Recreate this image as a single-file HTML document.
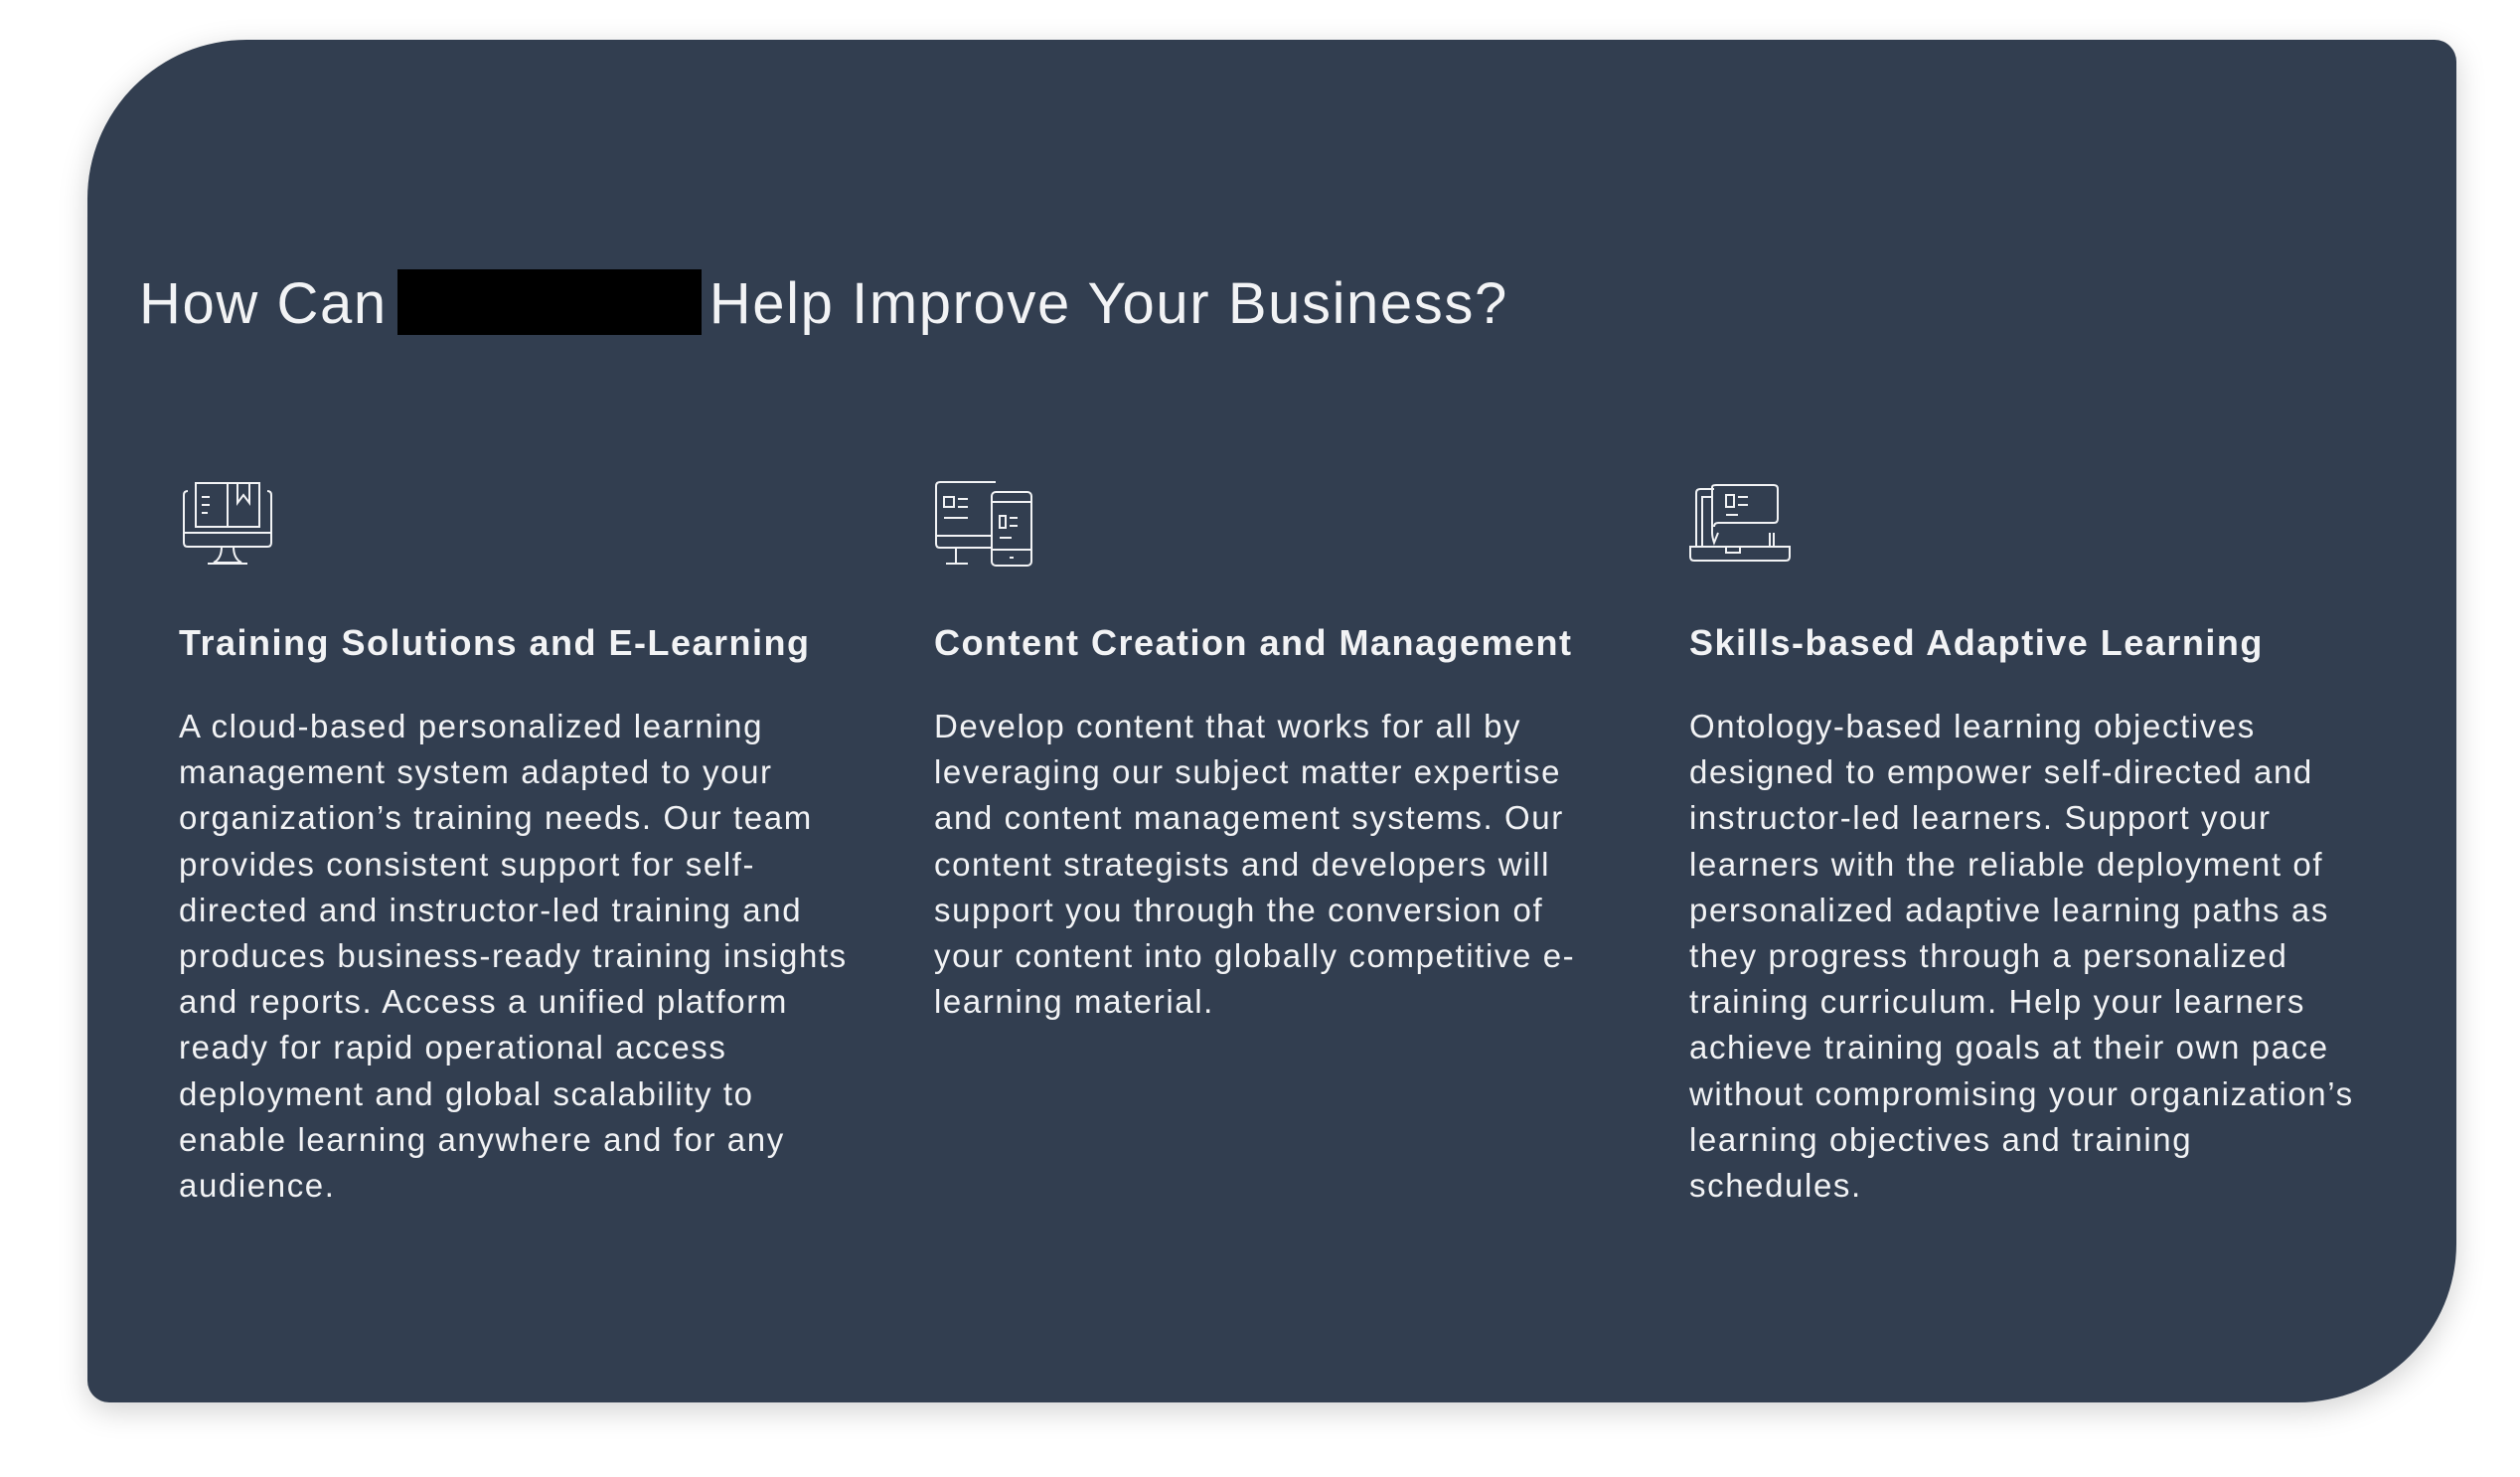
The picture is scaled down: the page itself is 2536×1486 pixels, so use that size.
<!DOCTYPE html>
<html><head><meta charset="utf-8"><style>
html,body{margin:0;padding:0;background:#fff;width:2536px;height:1486px;overflow:hidden}
body{font-family:"Liberation Sans",sans-serif;color:#f2f3f5}
.card{position:absolute;left:88px;top:40px;width:2384px;height:1371px;background:#323e50;border-radius:160px 22px 160px 22px;box-shadow:0 8px 30px rgba(0,0,0,0.18)}
h1{position:absolute;left:140px;top:266px;margin:0;font-weight:normal;font-size:58px;letter-spacing:1.6px;line-height:80px;white-space:nowrap}
.box{display:inline-block;width:306px;height:66px;background:#000;vertical-align:middle;margin:0 8px 0 10px;position:relative;top:-6px}
.col{position:absolute;top:0}
.col h2{position:absolute;left:0;top:622px;margin:0;font-size:36px;font-weight:bold;white-space:nowrap;line-height:50px;letter-spacing:1.5px}
.col p{position:absolute;left:0;top:708px;margin:0;font-size:33px;line-height:46.2px;white-space:nowrap;letter-spacing:1.6px}
svg{position:absolute;fill:none;stroke:#f2f3f5;stroke-width:2}
</style></head><body>
<div class="card"></div>
<h1>How Can<span class="box"></span>Help Improve Your Business?</h1>

<svg style="left:183px;top:484px" width="94" height="86" viewBox="0 0 94 86">
<path d="M6 10 Q2 10 2 14 V62 Q2 66 6 66 H86 Q90 66 90 62 V14 Q90 10 86 10"/>
<path d="M2 52 H90"/>
<rect x="14" y="2" width="32" height="44"/><rect x="46" y="2" width="32" height="44"/>
<path d="M56 2 V22 L62 14 L68 22 V2"/>
<path d="M20 16 H28 M20 24 H28 M20 32 H26"/>
<path d="M40 66 Q40 78 32 82 H60 Q52 78 52 66 M26 83 H66"/>
</svg>

<svg style="left:940px;top:483px" width="102" height="88" viewBox="0 0 102 88">
<path d="M62 2 H6 Q2 2 2 6 V64 Q2 68 6 68 H58"/>
<path d="M2 56 H58"/>
<rect x="10" y="17" width="10" height="10"/><path d="M24 19 H34 M24 27 H34 M10 38 H34"/>
<path d="M22 68 V84 H12 M22 84 H34"/>
<rect x="58" y="12" width="40" height="74" rx="4"/>
<path d="M58 22 H98 M58 70 H98 M76 78 H80"/>
<rect x="66" y="36" width="6" height="12"/><path d="M76 38 H84 M76 46 H84 M66 58 H78"/>
</svg>

<svg style="left:1699px;top:486px" width="104" height="82" viewBox="0 0 104 82">
<path d="M26 6 H12 Q8 6 8 10 V64"/>
<path d="M14 64 V14 H24"/>
<path d="M30 50 L26 60 Q24 54 24 50 V4 Q24 2 28 2 H86 Q90 2 90 6 V36 Q90 40 86 40 H30 Q26 40 26 44"/>
<rect x="38" y="12" width="8" height="12"/><path d="M50 14 H60 M50 22 H60 M38 32 H50"/>
<path d="M82 50 V64 M86 50 V64"/>
<path d="M2 64 H102 V74 Q102 78 98 78 H6 Q2 78 2 74 Z"/>
<path d="M38 64 V70 H52 V64"/>
</svg>

<div class="col" style="left:180px">
<h2>Training Solutions and E-Learning</h2>
<p>A cloud-based personalized learning<br>management system adapted to your<br>organization’s training needs. Our team<br>provides consistent support for self-<br>directed and instructor-led training and<br>produces business-ready training insights<br>and reports. Access a unified platform<br>ready for rapid operational access<br>deployment and global scalability to<br>enable learning anywhere and for any<br>audience.</p>
</div>
<div class="col" style="left:940px">
<h2>Content Creation and Management</h2>
<p>Develop content that works for all by<br>leveraging our subject matter expertise<br>and content management systems. Our<br>content strategists and developers will<br>support you through the conversion of<br>your content into globally competitive e-<br>learning material.</p>
</div>
<div class="col" style="left:1700px">
<h2>Skills-based Adaptive Learning</h2>
<p>Ontology-based learning objectives<br>designed to empower self-directed and<br>instructor-led learners. Support your<br>learners with the reliable deployment of<br>personalized adaptive learning paths as<br>they progress through a personalized<br>training curriculum. Help your learners<br>achieve training goals at their own pace<br>without compromising your organization’s<br>learning objectives and training<br>schedules.</p>
</div>
</body></html>
